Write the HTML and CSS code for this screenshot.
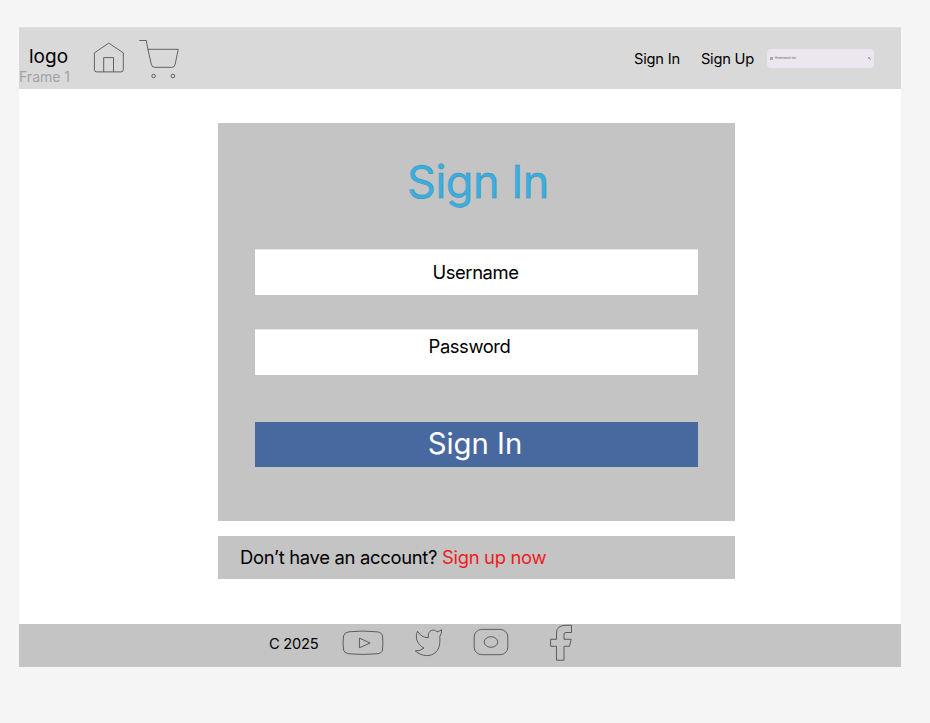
FILE: index.html
```html
<!DOCTYPE html>
<html lang="en">
<head>
<meta charset="utf-8">
<title>Sign In</title>
<link rel="stylesheet" href="styles.css">
</head>
<body>
<div class="page">
  <header class="header">
    <div class="brand">
      <span class="logo">logo</span>
      <span class="frame-label">Frame 1</span>
    </div>
    <svg class="icon home" viewBox="0 0 32 32"><path d="M15.800 1.100 30.300 10.900V27.500Q30.300 29.900 27.900 29.900H3.800Q1.400 29.900 1.400 27.500V10.900ZM10.700 29.900V15.600H20.500V29.900"/></svg>
    <svg class="icon cart" viewBox="0 0 42 42"><path d="M1.300 2.500H8.300L9.900 11.300H40.200L37.100 26.600Q36.500 29.300 33.800 29.300H16.800Q14 29.300 13.400 26.600L9.900 11.300"/><circle cx="15.600" cy="38" r="1.800"/><circle cx="34.900" cy="38" r="1.800"/></svg>
    <nav class="nav">
      <a class="nav-link">Sign In</a>
      <a class="nav-link">Sign Up</a>
    </nav>
    <div class="search">
      <svg class="search-menu" viewBox="0 0 3 3"><path d="M0 .5H3M0 1.500H3M0 2.500H3"/></svg>
      <span class="search-text">Hinted search text</span>
      <svg class="search-glass" viewBox="0 0 3 3"><circle cx="1" cy="1" r=".8"/><path d="M1.600 1.600 3 3"/></svg>
    </div>
  </header>
  <main class="main">
    <section class="card">
      <h1 class="title">Sign In</h1>
      <div class="field">Username</div>
      <div class="field password">Password</div>
      <div class="submit">Sign In</div>
    </section>
    <section class="signup"><span>Don’t have an account? <a class="signup-link">Sign up now</a></span></section>
  </main>
  <footer class="footer">
    <span class="copy">C 2025</span>
    <svg class="icon youtube" viewBox="0 0 42 26"><path d="M7 1.800Q21 .300 35 1.800Q39.800 2.300 40.500 6Q41.300 13 40.500 20Q39.800 23.300 35 23.800Q21 25.100 7 23.800Q2.300 23.300 1.500 20Q.600 13 1.500 6Q2.300 2.300 7 1.800ZM17.400 8.100V17.800L28.100 13Z"/></svg>
    <svg class="icon twitter" viewBox="0 0 30 30"><path d="M27.700 1.700Q25.500 3.300 23 3.900C20 .100 14 2.500 14.300 8V9.700Q7.500 9.800 3.500 3.300C1 9 2.500 16 10 20.100Q6 23.200 1.300 22.900C8 29 17 29 22 24C25.500 20.500 26.200 15.500 25.800 8.500Q27.700 5.500 27.700 1.700Z"/></svg>
    <svg class="icon instagram" viewBox="0 0 36 28"><rect x="1.200" y="1.400" width="33.600" height="25.300" rx="7.500"/><ellipse cx="18" cy="14" rx="6.800" ry="5.300"/><path d="M26.500 7.500h.5"/></svg>
    <svg class="icon facebook" viewBox="0 0 24 38"><path d="M22.500 1.300H17Q7.500 1.300 7.500 9V15.300H1.600V22.300H7.500V36.200H15V22.300H20.500L22.200 15.300H15V10Q15 8.500 17 8.500H22.500Z"/></svg>
  </footer>
</div>
</body>
</html>
```
FILE: styles.css
```css
* { box-sizing: border-box; }
body {
  margin: 0;
  background: #f5f5f5;
  color: #000;
  font-family: Inter, "Liberation Sans", sans-serif;
}
.page {
  display: flex;
  flex-direction: column;
  width: 882px;
  height: 640px;
  margin: 27px 0 0 19px;
  background: #fff;
}
.header {
  display: flex;
  align-items: flex-start;
  height: 62px;
  padding-right: 27px;
  background: #d9d9d9;
  border-top: 1px solid #e0e0e0;
}
.brand {
  display: flex;
  flex-direction: column;
  width: 74px;
  padding-top: 17px;
}
.logo {
  margin-bottom: -1px;
  padding-left: 10px;
  font-size: 19px;
  line-height: 24px;
}
.frame-label {
  font-size: 14px;
  line-height: 18px;
  color: #a3a3a3;
}
.icon {
  flex: none;
  fill: none;
  stroke: #444;
  stroke-width: 0.8;
}
.home { width: 32px; height: 32px; margin-top: 14px; }
.cart { width: 42px; height: 42px; margin: 10px 0 0 13px; }
.nav {
  display: flex;
  gap: 21px;
  margin: 20px 13px 0 auto;
}
.nav-link {
  font-size: 14.7px;
  line-height: 22px;
  letter-spacing: -0.23px;
}
.search {
  display: flex;
  align-items: center;
  width: 107px;
  height: 19px;
  margin-top: 21px;
  padding: 0 3px;
  border-radius: 4px;
  background: #ece6f0;
}
.search-menu, .search-glass {
  width: 3px;
  height: 3px;
  fill: none;
  stroke: #49454f;
  stroke-width: 0.4;
}
.search-text {
  margin-left: 2px;
  font: 2.6px/4px Roboto, sans-serif;
  color: #6b6670;
}
.search-glass { margin-left: auto; }
.main {
  flex: 1;
  width: 517px;
  margin-left: 199px;
  padding-top: 34px;
}
.card {
  height: 398px;
  padding: 30px 37px 0;
  background: #c4c4c4;
}
.title {
  margin: 0 0 38px;
  padding-left: 3px;
  text-align: center;
  font-size: 45px;
  font-weight: 400;
  line-height: 58px;
  letter-spacing: -0.5px;
  color: #3aaee0;
  -webkit-text-stroke: 0.4px #398eae;
}
.field {
  height: 46px;
  margin-bottom: 34px;
  padding-right: 2px;
  background: #fff;
  border-top: 1px solid #e5e5e5;
  text-align: center;
  font-size: 18.4px;
  line-height: 44px;
  letter-spacing: -0.4px;
}
.password {
  margin-bottom: 47px;
  padding-right: 14px;
  line-height: 32px;
}
.submit {
  height: 45px;
  padding-right: 3px;
  background: #4868a0;
  color: #fff;
  text-align: center;
  font-size: 29.3px;
  line-height: 43px;
}
.signup {
  height: 43px;
  margin-top: 15px;
  padding-left: 22px;
  background: #c4c4c4;
  font-size: 18.4px;
  line-height: 42px;
  letter-spacing: -0.3px;
}
.signup-link { color: #ee1c1c; }
.footer {
  display: flex;
  height: 43px;
  padding-left: 250px;
  background: #c4c4c4;
}
.copy {
  width: 73px;
  font-size: 14.7px;
  line-height: 41px;
  letter-spacing: -0.25px;
}
.youtube { width: 42px; height: 26px; margin-top: 6px; }
.twitter { width: 30px; height: 30px; margin: 4px 0 0 30px; }
.instagram { width: 36px; height: 28px; margin: 4px 0 0 29px; }
.facebook { width: 24px; height: 38px; margin: 0 0 0 40px; }
```
